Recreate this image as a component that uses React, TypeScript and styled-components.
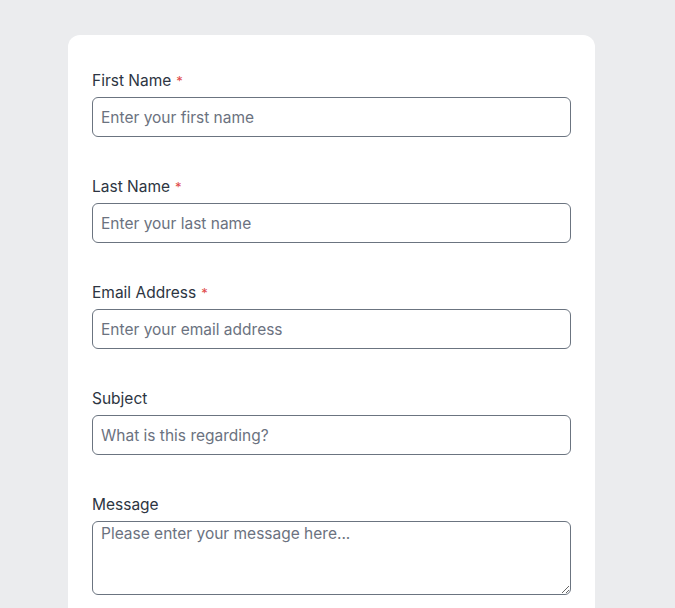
import React from "react";
import styled, { createGlobalStyle } from "styled-components";

const Global = createGlobalStyle`
  html, body { margin: 0; padding: 0; background: #ebecee; }
  body { font-family: Inter, "Noto Sans", Arial, sans-serif; }
  * { box-sizing: border-box; }
`;

const Page = styled.div`
  padding: 35px 0 0 68px;
  height: 608px;
  overflow: hidden;
`;

const Card = styled.form`
  width: 527px;
  background: #ffffff;
  border-radius: 12px;
  padding: 34px 24px 40px;
  display: flex;
  flex-direction: column;
  gap: 38px;
`;

const Field = styled.div`
  display: flex;
  flex-direction: column;
  gap: 4px;
`;

const Label = styled.label`
  font-size: 15.5px;
  line-height: 24px;
  color: #2d3542;
`;

const Req = styled.span`
  color: #e04848;
  margin-left: 5px;
  font-size: 13px;
`;

const inputBase = `
  width: 479px;
  border: 1px solid #6b7480;
  border-radius: 6px;
  padding: 0 8px;
  font-family: Inter, "Noto Sans", Arial, sans-serif;
  font-size: 15.5px;
  color: #1f2937;
  background: #fff;
  outline: none;
  &::placeholder { color: #6b7280; opacity: 1; }
`;

const Input = styled.input`
  ${inputBase}
  height: 40px;
`;

const TextArea = styled.textarea`
  ${inputBase}
  height: 74px;
  padding-top: 1px;
  line-height: 22px;
  resize: vertical;
`;

const fields = [
  { label: "First Name", ph: "Enter your first name", req: true },
  { label: "Last Name", ph: "Enter your last name", req: true },
  { label: "Email Address", ph: "Enter your email address", req: true },
  { label: "Subject", ph: "What is this regarding?", req: false },
];

export default function App() {
  return (
    <>
      <Global />
      <Page>
        <Card onSubmit={(e) => e.preventDefault()}>
          {fields.map((f) => (
            <Field key={f.label}>
              <Label>
                {f.label}
                {f.req && <Req>*</Req>}
              </Label>
              <Input placeholder={f.ph} />
            </Field>
          ))}
          <Field>
            <Label>Message</Label>
            <TextArea placeholder="Please enter your message here..." />
          </Field>
        </Card>
      </Page>
    </>
  );
}
